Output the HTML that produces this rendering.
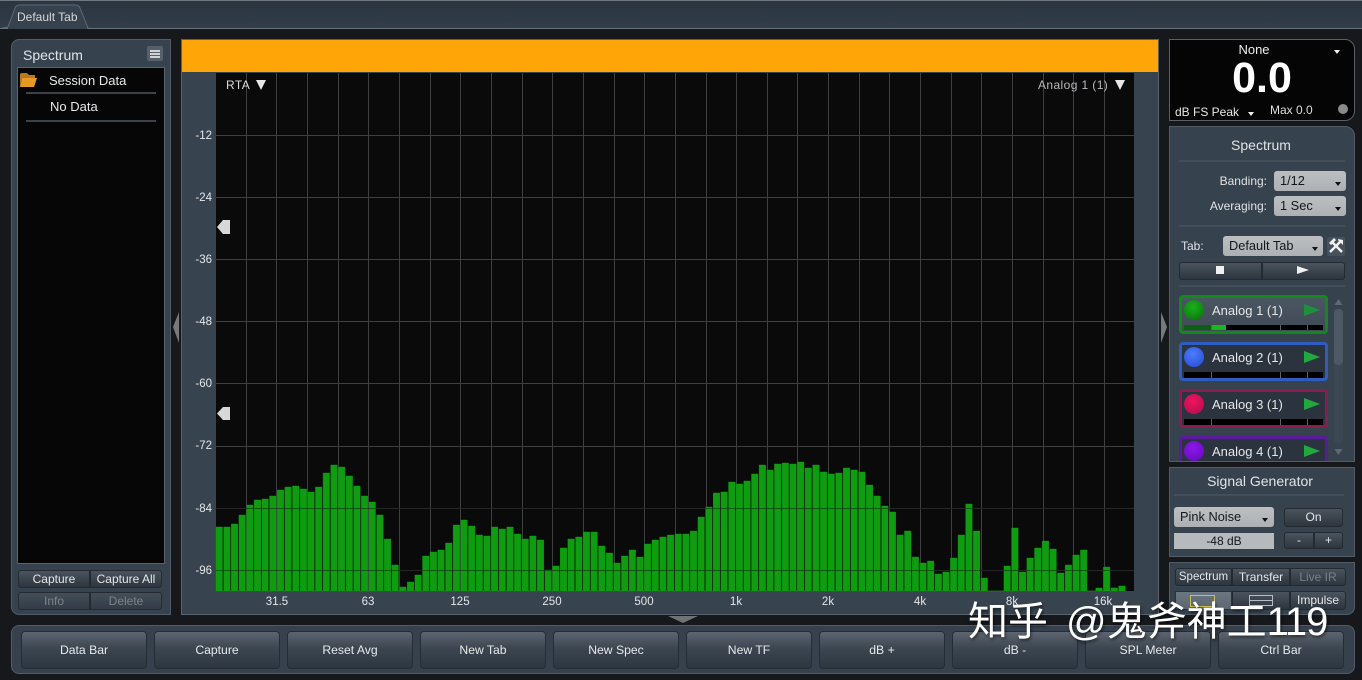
<!DOCTYPE html>
<html><head><meta charset="utf-8">
<style>
html,body{margin:0;padding:0;background:#17181c;}
#r{position:relative;width:1362px;height:680px;overflow:hidden;background:#17181c;font-family:"Liberation Sans","Noto Sans CJK SC",sans-serif;font-size:12px;color:#e4e6e8;filter:blur(.35px);}
#r div{position:absolute;box-sizing:border-box;}
.t{white-space:nowrap;line-height:16px;height:16px;}
.c{text-align:center;}
.p{background:#36434f;border:1px solid #515c67;}
.b{background:linear-gradient(#4a545e,#2d353e);border:1px solid #232a31;text-align:center;white-space:nowrap;color:#e4e6e8;}
.bb{background:linear-gradient(#5d6670,#3c4650 45%,#2e3741);border:1px solid #252c33;border-radius:4px;text-align:center;line-height:36px;color:#e6e8ea;font-size:12.2px;}
.s{background:linear-gradient(#bcbfc2,#aeb1b4);border-radius:3px;color:#15181b;line-height:20px;padding-left:6px;white-space:nowrap;font-size:12.8px;}
.sep{background:#424e59;height:2px;}
.arr{width:0;height:0;border-left:3.5px solid transparent;border-right:3.5px solid transparent;}
.ch{left:1179px;width:149px;height:39px;background:#2b343e;border:3px solid;border-radius:4px;}
.m{background:#000;}
.tick{background:#5c6268;width:1px;}
.dis{color:#7b848c;}
</style></head><body>
<div id="r">
<!-- top bar -->
<div style="left:0;top:0;width:1362px;height:29px;background:linear-gradient(#2a3540,#313d49);border-top:1px solid #6e7780;border-bottom:1px solid #69727c;"></div>
<svg style="position:absolute;left:0;top:0" width="100" height="30"><path d="M2 28 L8 27 L15 8 Q16 5 20 5 L75 5 Q79 5 80 8 L88 28 Z" fill="#36424e" stroke="#5e6873"/><path d="M8 28H87" stroke="#36424e" stroke-width="2"/></svg>
<div class="t" style="left:17px;top:9px;color:#d5d8da;font-size:12px">Default Tab</div>

<!-- left panel -->
<div class="p" style="left:11px;top:39px;width:160px;height:576px;border-radius:8px 0 0 8px"></div>
<div class="t" style="left:23px;top:47px;font-size:14px;color:#e0e3e5">Spectrum</div>
<div style="left:147px;top:46px;width:16px;height:15px;background:#56606b;border-radius:2px"></div>
<div style="left:150px;top:50px;width:10px;height:2px;background:#cfd2d5"></div>
<div style="left:150px;top:53px;width:10px;height:2px;background:#cfd2d5"></div>
<div style="left:150px;top:56px;width:10px;height:2px;background:#cfd2d5"></div>
<div style="left:17px;top:67px;width:148px;height:497px;background:#060607;border:1px solid #59636e"></div>
<svg style="position:absolute;left:19px;top:71px" width="20" height="18"><path d="M1 4 Q1 2 3 2 L8 2 L10 4 L16 4 L16 7 L3 7 L1 15 Z" fill="#b87a1c"/><path d="M3 7 L18 7 L15 16 L1 16 Z" fill="#e69a24"/></svg>
<div class="t" style="left:49px;top:73px;font-size:13px;color:#e6e8ea">Session Data</div>
<div style="left:26px;top:92px;width:130px;height:2px;background:#3d4248"></div>
<div class="t" style="left:50px;top:99px;font-size:13px;color:#e6e8ea">No Data</div>
<div style="left:26px;top:120px;width:130px;height:2px;background:#3d4248"></div>
<div class="b" style="left:18px;top:570px;width:72px;height:18px;line-height:16px;border-radius:3px 0 0 3px">Capture</div>
<div class="b" style="left:90px;top:570px;width:72px;height:18px;line-height:16px;border-radius:0 3px 3px 0">Capture All</div>
<div class="b dis" style="left:18px;top:592px;width:72px;height:18px;line-height:16px;border-radius:3px 0 0 3px;color:#7b848c;background:linear-gradient(#444e58,#333c46)">Info</div>
<div class="b dis" style="left:90px;top:592px;width:72px;height:18px;line-height:16px;border-radius:0 3px 3px 0;color:#7b848c;background:linear-gradient(#444e58,#333c46)">Delete</div>

<!-- side arrows -->
<svg style="position:absolute;left:171px;top:310px" width="10" height="34"><path d="M8 2 L2 17 L8 33 Z" fill="#77797c"/></svg>
<svg style="position:absolute;left:1159px;top:310px" width="10" height="34"><path d="M2 2 L8 17 L2 33 Z" fill="#77797c"/></svg>
<svg style="position:absolute;left:665px;top:614px" width="36" height="11"><path d="M3 2 H33 L18 9 Z" fill="#707274"/></svg>

<!-- main panel -->
<div style="left:181px;top:39px;width:978px;height:576px;background:#37434f;border:1px solid #59636e"></div>
<div style="left:182px;top:40px;width:976px;height:32px;background:#ffa508"></div>
<svg style="position:absolute;left:0;top:0" width="1362" height="680">
<rect x="216" y="73" width="918" height="518" fill="#0a0a0b"/>
<g stroke="#3e3f41" stroke-width="1">
<path d="M246.5 73V591M276.5 73V591M307.5 73V591M338.5 73V591M368.5 73V591M399.5 73V591M430.5 73V591M460.5 73V591M491.5 73V591M522.5 73V591M552.5 73V591M583.5 73V591M614.5 73V591M644.5 73V591M675.5 73V591M706.5 73V591M736.5 73V591M767.5 73V591M797.5 73V591M828.5 73V591M859.5 73V591M889.5 73V591M920.5 73V591M951.5 73V591M981.5 73V591M1012.5 73V591M1043.5 73V591M1073.5 73V591M1104.5 73V591"/>
<path d="M214 135.5H1134M214 197.5H1134M214 259.5H1134M214 321.5H1134M214 383.5H1134M214 446.5H1134M214 508.5H1134M214 570.5H1134"/>
</g>
<path fill="#0f9c10" stroke="#0f9c10" stroke-width=".4" d="M216 591v-64h6.5v64h1.15v-64h6.5v64h1.15v-67h6.5v67h1.15v-76h6.5v76h1.15v-86h6.5v86h1.15v-91h6.5v91h1.15v-92h6.5v92h1.15v-95h6.5v95h1.15v-101h6.5v101h1.15v-104h6.5v104h1.15v-105h6.5v105h1.15v-102h6.5v102h1.15v-99h6.5v99h1.15v-104h6.5v104h1.15v-118h6.5v118h1.15v-126h6.5v126h1.15v-124h6.5v124h1.15v-115h6.5v115h1.15v-105h6.5v105h1.15v-95h6.5v95h1.15v-89h6.5v89h1.15v-76h6.5v76h1.15v-52h6.5v52h1.15v-26h6.5v26h1.15v-4h6.5v4h1.15v-9h6.5v9h1.15v-16h6.5v16h1.15v-35h6.5v35h1.15v-39h6.5v39h1.15v-41h6.5v41h1.15v-48h6.5v48h1.15v-66h6.5v66h1.15v-71h6.5v71h1.15v-65h6.5v65h1.15v-56h6.5v56h1.15v-55h6.5v55h1.15v-64h6.5v64h1.15v-62h6.5v62h1.15v-64h6.5v64h1.15v-57h6.5v57h1.15v-52h6.5v52h1.15v-55h6.5v55h1.15v-51h6.5v51h1.15v-21h6.5v21h1.15v-25h6.5v25h1.15v-43h6.5v43h1.15v-52h6.5v52h1.15v-54h6.5v54h1.15v-59h6.5v59h1.15v-59h6.5v59h1.15v-45h6.5v45h1.15v-38h6.5v38h1.15v-28h6.5v28h1.15v-35h6.5v35h1.15v-41h6.5v41h1.15v-34h6.5v34h1.15v-47h6.5v47h1.15v-51h6.5v51h1.15v-54h6.5v54h1.15v-56h6.5v56h1.15v-57h6.5v57h1.15v-57h6.5v57h1.15v-60h6.5v60h1.15v-74h6.5v74h1.15v-84h6.5v84h1.15v-98h6.5v98h1.15v-99h6.5v99h1.15v-109h6.5v109h1.15v-107h6.5v107h1.15v-110h6.5v110h1.15v-117h6.5v117h1.15v-126h6.5v126h1.15v-121h6.5v121h1.15v-127h6.5v127h1.15v-128h6.5v128h1.15v-127h6.5v127h1.15v-129h6.5v129h1.15v-123h6.5v123h1.15v-126h6.5v126h1.15v-119h6.5v119h1.15v-117h6.5v117h1.15v-118h6.5v118h1.15v-123h6.5v123h1.15v-121h6.5v121h1.15v-119h6.5v119h1.15v-106h6.5v106h1.15v-95h6.5v95h1.15v-85h6.5v85h1.15v-79h6.5v79h1.15v-56h6.5v56h1.15v-60h6.5v60h1.15v-34h6.5v34h1.15v-28h6.5v28h1.15v-30h6.5v30h1.15v-17h6.5v17h1.15v-19h6.5v19h1.15v-33h6.5v33h1.15v-56h6.5v56h1.15v-87h6.5v87h1.15v-60h6.5v60h1.15v-13h6.5v13h1.15h7.65h7.65v-25h6.5v25h1.15v-63h6.5v63h1.15v-19h6.5v19h1.15v-33h6.5v33h1.15v-43h6.5v43h1.15v-50h6.5v50h1.15v-42h6.5v42h1.15v-18h6.5v18h1.15v-26h6.5v26h1.15v-36h6.5v36h1.15v-41h6.5v41h1.15h7.65v-3h6.5v3h1.15v-24h6.5v24h1.15v-3h6.5v3h1.15v-5h6.5v5h1.15z"/>
<path d="M216 508.5H1134M216 570.5H1134" stroke="#000" stroke-opacity=".4" stroke-width="1"/>
<path d="M217 227 L223 220 L230 220 L230 234 L223 234 Z" fill="#d8d8d8"/>
<path d="M217 413.5 L223 407 L230 407 L230 420 L223 420 Z" fill="#d8d8d8"/>
<path d="M256 80H266L261 90Z" fill="#e8e8e8"/>
<path d="M1115 80H1125L1120 90Z" fill="#e8e8e8"/>
</svg>
<div class="t" style="left:226px;top:77px;font-size:12px;color:#d8dadc;letter-spacing:.4px">RTA</div>
<div class="t" style="left:1038px;top:77px;font-size:12px;color:#b8babc;letter-spacing:.4px">Analog 1 (1)</div>
<div class="t" style="left:190px;top:128px;width:22px;text-align:right;font-size:11.5px">-12</div>
<div class="t" style="left:190px;top:190px;width:22px;text-align:right;font-size:11.5px">-24</div>
<div class="t" style="left:190px;top:252px;width:22px;text-align:right;font-size:11.5px">-36</div>
<div class="t" style="left:190px;top:314px;width:22px;text-align:right;font-size:11.5px">-48</div>
<div class="t" style="left:190px;top:376px;width:22px;text-align:right;font-size:11.5px">-60</div>
<div class="t" style="left:190px;top:438px;width:22px;text-align:right;font-size:11.5px">-72</div>
<div class="t" style="left:190px;top:501px;width:22px;text-align:right;font-size:11.5px">-84</div>
<div class="t" style="left:190px;top:563px;width:22px;text-align:right;font-size:11.5px">-96</div>
<div class="t c" style="left:257px;top:594px;width:40px;font-size:11.5px">31.5</div>
<div class="t c" style="left:348px;top:594px;width:40px;font-size:11.5px">63</div>
<div class="t c" style="left:440px;top:594px;width:40px;font-size:11.5px">125</div>
<div class="t c" style="left:532px;top:594px;width:40px;font-size:11.5px">250</div>
<div class="t c" style="left:624px;top:594px;width:40px;font-size:11.5px">500</div>
<div class="t c" style="left:716px;top:594px;width:40px;font-size:11.5px">1k</div>
<div class="t c" style="left:808px;top:594px;width:40px;font-size:11.5px">2k</div>
<div class="t c" style="left:900px;top:594px;width:40px;font-size:11.5px">4k</div>
<div class="t c" style="left:992px;top:594px;width:40px;font-size:11.5px">8k</div>
<div class="t c" style="left:1083px;top:594px;width:40px;font-size:11.5px">16k</div>

<!-- readout -->
<div style="left:1169px;top:39px;width:186px;height:82px;background:#050506;border:1px solid #5a6068;border-radius:0 10px 10px 0"></div>
<div class="t c" style="left:1224px;top:42px;width:60px;font-size:13px;color:#eee">None</div>
<div class="arr" style="left:1334px;top:50px;border-top:4px solid #eee"></div>
<div class="c" style="left:1212px;top:55px;width:100px;height:46px;line-height:46px;font-size:43px;font-weight:bold;color:#fff;white-space:nowrap">0.0</div>
<div class="t" style="left:1175px;top:104px;font-size:12px;color:#e8e8e8">dB FS Peak</div>
<div class="arr" style="left:1248px;top:112px;border-top:4px solid #eee"></div>
<div class="t" style="left:1270px;top:102px;font-size:12px;color:#ddd">Max 0.0</div>
<div style="left:1338px;top:104px;width:10px;height:10px;border-radius:5px;background:#8a8a8a"></div>

<!-- spectrum panel -->
<div class="p" style="left:1169px;top:126px;width:186px;height:336px;border-radius:0 10px 0 0"></div>
<div class="t c" style="left:1211px;top:137px;width:100px;font-size:14px;color:#e0e3e5">Spectrum</div>
<div class="sep" style="left:1179px;top:160px;width:166px"></div>
<div class="t" style="left:1190px;top:173px;width:77px;text-align:right;color:#dfe1e3">Banding:</div>
<div class="s" style="left:1274px;top:171px;width:72px;height:20px">1/12</div>
<div class="arr" style="left:1335px;top:182px;border-top:4px solid #111"></div>
<div class="t" style="left:1190px;top:198px;width:77px;text-align:right;color:#dfe1e3">Averaging:</div>
<div class="s" style="left:1274px;top:196px;width:72px;height:20px">1 Sec</div>
<div class="arr" style="left:1335px;top:207px;border-top:4px solid #111"></div>
<div class="sep" style="left:1179px;top:225px;width:166px"></div>
<div class="t" style="left:1181px;top:238px;color:#dfe1e3">Tab:</div>
<div class="s" style="left:1223px;top:236px;width:100px;height:20px">Default Tab</div>
<div class="arr" style="left:1312px;top:247px;border-top:4px solid #111"></div>
<div style="left:1327px;top:237px;width:18px;height:19px;background:#46515c;border-radius:2px"></div>
<svg style="position:absolute;left:1327px;top:237px" width="18" height="19"><path d="M3 15 L13 5M15 15 L5 5" stroke="#f2f2f2" stroke-width="2.4"/><path d="M2 6 L7 1 L9 3 L4 8Z M11 2 L16 3 L16 8 L14 6 L12 6Z" fill="#f2f2f2"/></svg>
<div class="b" style="left:1179px;top:262px;width:83px;height:18px;border-radius:3px 0 0 3px"></div>
<div class="b" style="left:1262px;top:262px;width:83px;height:18px;border-radius:0 3px 3px 0"></div>
<div style="left:1216px;top:266px;width:8px;height:8px;background:#f0f0f0"></div>
<svg style="position:absolute;left:1296px;top:265px" width="14" height="12"><path d="M1 1 L13 5 L1 9Z" fill="#f0f0f0"/></svg>
<div class="sep" style="left:1179px;top:285px;width:166px"></div>

<!-- channels -->
<div class="ch" style="top:295px;border-color:#128a1a;background:linear-gradient(#4a5662,#3f4a56)"></div>
<div class="ch" style="top:342px;border-color:#2f5cc0"></div>
<div class="ch" style="top:389px;border-color:#8c1c50"></div>
<div class="ch" style="top:436px;border-color:#5a1a9c;height:25px;border-bottom:0;border-radius:4px 4px 0 0"></div>

<svg style="position:absolute;left:1179px;top:295px" width="150" height="166">
<defs>
<radialGradient id="g1" cx=".45" cy=".35" r=".7"><stop offset="0" stop-color="#1cb01c"/><stop offset="1" stop-color="#0a7a0a"/></radialGradient>
<radialGradient id="g2" cx=".45" cy=".35" r=".7"><stop offset="0" stop-color="#4d7dff"/><stop offset="1" stop-color="#2a52d8"/></radialGradient>
<radialGradient id="g3" cx=".45" cy=".35" r=".7"><stop offset="0" stop-color="#f0145e"/><stop offset="1" stop-color="#b80f50"/></radialGradient>
<radialGradient id="g4" cx=".45" cy=".35" r=".7"><stop offset="0" stop-color="#8a18e8"/><stop offset="1" stop-color="#6a0cc0"/></radialGradient>
</defs>
<circle cx="15" cy="15" r="10" fill="url(#g1)"/>
<circle cx="15" cy="62" r="10" fill="url(#g2)"/>
<circle cx="15" cy="109" r="10" fill="url(#g3)"/>
<circle cx="15" cy="156" r="10" fill="url(#g4)"/>
<path d="M125 9 L141 15 L125 21Z" fill="#1e8f3a"/>
<path d="M125 56 L141 62 L125 68Z" fill="#22a83e"/>
<path d="M125 103 L141 109 L125 115Z" fill="#22a83e"/>
<path d="M125 150 L141 156 L125 162Z" fill="#22a83e"/>
</svg>
<div class="t" style="left:1212px;top:303px;font-size:13px">Analog 1 (1)</div>
<div class="t" style="left:1212px;top:350px;font-size:13px">Analog 2 (1)</div>
<div class="t" style="left:1212px;top:397px;font-size:13px">Analog 3 (1)</div>
<div style="left:1212px;top:443px;width:100px;height:18px;overflow:hidden"><div class="t" style="left:0;top:1px;font-size:13px">Analog 4 (1)</div></div>
<div class="m" style="left:1184px;top:325px;width:139px;height:5px"></div>
<div style="left:1184px;top:325px;width:28px;height:5px;background:#0c5e10"></div>
<div style="left:1212px;top:325px;width:14px;height:5px;background:#17b81c"></div>
<div class="m" style="left:1184px;top:372px;width:139px;height:6px"></div>
<div class="m" style="left:1184px;top:419px;width:139px;height:6px"></div>
<div class="tick" style="left:1211px;top:325px;height:5px"></div><div class="tick" style="left:1280px;top:325px;height:5px"></div><div class="tick" style="left:1307px;top:325px;height:5px"></div>
<div class="tick" style="left:1211px;top:372px;height:6px"></div><div class="tick" style="left:1280px;top:372px;height:6px"></div><div class="tick" style="left:1307px;top:372px;height:6px"></div>
<div class="tick" style="left:1211px;top:419px;height:6px"></div><div class="tick" style="left:1280px;top:419px;height:6px"></div><div class="tick" style="left:1307px;top:419px;height:6px"></div>
<!-- scrollbar -->
<div style="left:1334px;top:309px;width:9px;height:134px;background:#3b4753;border-radius:4px"></div>
<div style="left:1334px;top:309px;width:9px;height:56px;background:#4d5965;border-radius:4px"></div>
<svg style="position:absolute;left:1333px;top:296px" width="11" height="162"><path d="M1.5 9 L5.5 3 L9.5 9Z" fill="#5d6873"/><path d="M1.5 153 L5.5 159 L9.5 153Z" fill="#5d6873"/></svg>

<!-- signal generator -->
<div class="p" style="left:1169px;top:467px;width:186px;height:90px"></div>
<div class="t c" style="left:1200px;top:473px;width:120px;font-size:14px;color:#e0e3e5">Signal Generator</div>
<div class="sep" style="left:1174px;top:494px;width:170px"></div>
<div class="s" style="left:1174px;top:507px;width:100px;height:20px">Pink Noise</div>
<div class="arr" style="left:1262px;top:518px;border-top:4px solid #111"></div>
<div class="b" style="left:1284px;top:508px;width:59px;height:19px;line-height:17px;border-radius:3px">On</div>
<div style="left:1174px;top:533px;width:100px;height:16px;background:#b6babd;color:#15181b;text-align:center;line-height:16px">-48 dB</div>
<div class="b" style="left:1284px;top:532px;width:30px;height:17px;line-height:15px;border-radius:3px 0 0 3px">-</div>
<div class="b" style="left:1314px;top:532px;width:29px;height:17px;line-height:15px;border-radius:0 3px 3px 0">+</div>

<!-- view panel -->
<div class="p" style="left:1169px;top:562px;width:186px;height:53px;border-radius:0 0 8px 0"></div>
<div class="b" style="left:1175px;top:568px;width:57px;height:18px;line-height:16px;font-size:11.5px;border-radius:3px 0 0 3px">Spectrum</div>
<div class="b" style="left:1232px;top:568px;width:58px;height:18px;line-height:16px;font-size:12px">Transfer</div>
<div class="b" style="left:1290px;top:568px;width:56px;height:18px;line-height:16px;font-size:12px;border-radius:0 3px 3px 0;color:#76808a">Live IR</div>
<div style="left:1175px;top:591px;width:57px;height:19px;background:linear-gradient(#6c7681,#5d6772);border:1px solid #2b323a"></div>
<div class="b" style="left:1232px;top:591px;width:58px;height:19px"></div>
<div class="b" style="left:1290px;top:591px;width:56px;height:19px;line-height:17px;font-size:12px;border-radius:0 3px 3px 0">Impulse</div>
<div style="left:1190px;top:595px;width:25px;height:12px;border:1px solid #c9c24a"></div>
<div style="left:1249px;top:595px;width:24px;height:11px;border:1px solid #b9bdc1"></div>
<div style="left:1249px;top:600px;width:24px;height:1px;background:#b9bdc1"></div>

<!-- bottom bar -->
<div class="p" style="left:11px;top:625px;width:1344px;height:49px;border-radius:8px;background:#36414d"></div>
<div class="bb" style="left:21px;top:631px;width:126px;height:38px">Data Bar</div>
<div class="bb" style="left:154px;top:631px;width:126px;height:38px">Capture</div>
<div class="bb" style="left:287px;top:631px;width:126px;height:38px">Reset Avg</div>
<div class="bb" style="left:420px;top:631px;width:126px;height:38px">New Tab</div>
<div class="bb" style="left:553px;top:631px;width:126px;height:38px">New Spec</div>
<div class="bb" style="left:686px;top:631px;width:126px;height:38px">New TF</div>
<div class="bb" style="left:819px;top:631px;width:126px;height:38px">dB +</div>
<div class="bb" style="left:952px;top:631px;width:126px;height:38px">dB -</div>
<div class="bb" style="left:1085px;top:631px;width:126px;height:38px">SPL Meter</div>
<div class="bb" style="left:1218px;top:631px;width:126px;height:38px">Ctrl Bar</div>

<!-- watermark -->
<div style="left:968px;top:596px;height:52px;line-height:52px;font-size:40px;color:#fff;white-space:nowrap;text-shadow:1px 2px 3px rgba(0,0,0,.55)">知乎<span style="margin-left:18px">@鬼斧神工</span><span style="letter-spacing:-1px">119</span></div>
</div>
</body></html>
